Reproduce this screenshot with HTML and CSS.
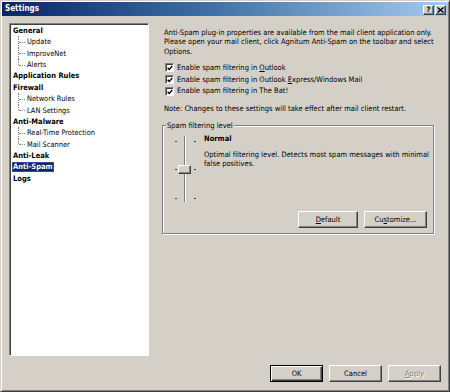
FILE: index.html
```html
<!DOCTYPE html>
<html>
<head>
<meta charset="utf-8">
<link rel="stylesheet" href="styles.css">
</head>
<body>
<div class="window">
  <div class="titlebar">
    <span class="title">Settings</span>
    <div class="tb-buttons">
      <span class="tb-btn help">?</span>
      <span class="tb-btn close"><svg width="7" height="6" viewBox="0 0 7 6"><path d="M0.5 0.5 L6.5 5.5 M6.5 0.5 L0.5 5.5" stroke="#000" stroke-width="1.4"/></svg></span>
    </div>
  </div>
  <div class="client">
    <div class="tree">
      <div class="node parent"><span class="label">General</span></div>
      <div class="group-children">
        <div class="node child">Update</div>
        <div class="node child">ImproveNet</div>
        <div class="node child last">Alerts</div>
      </div>
      <div class="node parent"><span class="label">Application Rules</span></div>
      <div class="node parent"><span class="label">Firewall</span></div>
      <div class="group-children">
        <div class="node child">Network Rules</div>
        <div class="node child last">LAN Settings</div>
      </div>
      <div class="node parent"><span class="label">Anti-Malware</span></div>
      <div class="group-children">
        <div class="node child">Real-Time Protection</div>
        <div class="node child last">Mail Scanner</div>
      </div>
      <div class="node parent"><span class="label">Anti-Leak</span></div>
      <div class="node parent"><span class="sel">Anti-Spam</span></div>
      <div class="node parent"><span class="label">Logs</span></div>
    </div>
    <div class="content">
      <p class="intro">Anti-Spam plug-in properties are available from the mail client application only.<br>Please open your mail client, click Agnitum Anti-Spam on the toolbar and select<br>Options.</p>
      <div class="checks">
        <div class="check"><span class="box"><svg width="7" height="7" viewBox="0 0 7 7"><path d="M0.8 3.2 L2.6 5.2 L6.2 1.2" fill="none" stroke="#000" stroke-width="1.5"/></svg></span><span>Enable spam filtering in <u>O</u>utlook</span></div>
        <div class="check"><span class="box"><svg width="7" height="7" viewBox="0 0 7 7"><path d="M0.8 3.2 L2.6 5.2 L6.2 1.2" fill="none" stroke="#000" stroke-width="1.5"/></svg></span><span>Enable spam filtering in Outlook <u>E</u>xpress/Windows Mail</span></div>
        <div class="check"><span class="box"><svg width="7" height="7" viewBox="0 0 7 7"><path d="M0.8 3.2 L2.6 5.2 L6.2 1.2" fill="none" stroke="#000" stroke-width="1.5"/></svg></span><span>Enable spam filtering in The Bat!</span></div>
      </div>
      <p class="note">Note: Changes to these settings will take effect after mail client restart.</p>
      <fieldset class="group">
        <legend>Spam filtering level</legend>
        <div class="group-body">
          <div class="slider">
            <span class="tick l t1"></span><span class="tick r t1"></span>
            <span class="tick l t2"></span><span class="tick r t2"></span>
            <span class="tick l t3"></span><span class="tick r t3"></span>
            <span class="track"></span>
            <span class="thumb"></span>
          </div>
          <div class="level">
            <div class="level-name">Normal</div>
            <div class="level-desc">Optimal filtering level. Detects most spam messages with minimal<br>false positives.</div>
          </div>
        </div>
        <div class="group-buttons">
          <button class="btn w60"><u>D</u>efault</button>
          <button class="btn w63">Cu<u>s</u>tomize...</button>
        </div>
      </fieldset>
    </div>
  </div>
  <div class="footer">
    <button class="btn w53 default">OK</button>
    <button class="btn w53">Cancel</button>
    <button class="btn w53 disabled"><u>A</u>pply</button>
  </div>
</div>
</body>
</html>
```
FILE: styles.css
```css
html, body {
  margin: 0;
  padding: 0;
  background: #D4D0C8;
}
body {
  font-family: "DejaVu Sans Condensed", "DejaVu Sans", sans-serif;
  font-stretch: condensed;
  font-size: 7.5px;
  line-height: 9.3px;
  color: #000;
}
.window {
  width: 450px;
  height: 392px;
  box-sizing: border-box;
  border: 1px solid;
  border-color: #D4D0C8 #404040 #404040 #D4D0C8;
  box-shadow: inset 1px 1px #fff, inset -1px -1px #808080;
  padding: 1px;
  display: flex;
  flex-direction: column;
  background: #D4D0C8;
}
.titlebar {
  height: 14px;
  flex: none;
  display: flex;
  align-items: center;
  justify-content: space-between;
  padding: 0 2px 0 3px;
  background: linear-gradient(to right, #0A246A 0%, #3A6EA5 45%, #A6CAF0 100%);
}
.title {
  color: #fff;
  font-weight: bold;
  font-size: 8px;
}
.tb-buttons {
  display: flex;
  gap: 1px;
  padding-top: 1px;
}
.tb-btn {
  width: 11px;
  height: 10px;
  box-sizing: border-box;
  background: #D4D0C8;
  border: 1px solid;
  border-color: #fff #404040 #404040 #fff;
  box-shadow: inset -1px -1px #808080;
  display: flex;
  align-items: center;
  justify-content: center;
  font-weight: bold;
  font-size: 7.5px;
  line-height: 8px;
}
.client {
  flex: none;
  display: flex;
  padding: 7px 0 0 7px;
}
.tree {
  width: 140px;
  height: 333px;
  box-sizing: border-box;
  background: #fff;
  border: 1px solid;
  border-color: #808080 #fff #fff #808080;
  box-shadow: inset 1px 1px #404040, 1px 1px #D4D0C8;
  padding-top: 1px;
}
.node {
  height: 11.38px;
  display: flex;
  align-items: center;
  white-space: nowrap;
}
.parent {
  font-weight: bold;
  padding-left: 2px;
}
.label {
  display: inline-block;
  padding: 0 1px;
  line-height: 10px;
  height: 10px;
}
.sel {
  display: inline-block;
  padding: 0 1px;
  line-height: 10px;
  height: 10px;
  background: #0A246A;
  color: #ffffff;
  box-shadow: inset 0 0 0 1px #3A4E8A;
}
.child {
  position: relative;
  padding-left: 17px;
  font-size: 7.4px;
}
.child::before {
  content: "";
  position: absolute;
  left: 8px;
  top: 0;
  height: 100%;
  border-left: 1px dotted #808080;
}
.child.last::before {
  height: 50%;
}
.child::after {
  content: "";
  position: absolute;
  left: 9px;
  top: 50%;
  width: 6px;
  border-top: 1px dotted #808080;
}
.content {
  margin-left: 15px;
  padding-top: 5px;
  width: 272px;
}
.intro {
  margin: 0;
  white-space: nowrap;
}
.checks {
  margin-top: 6px;
}
.check {
  height: 11.7px;
  display: flex;
  align-items: center;
  white-space: nowrap;
}
.box {
  width: 9px;
  height: 9px;
  box-sizing: border-box;
  margin-left: 1px;
  margin-right: 3px;
  background: #fff;
  border: 1px solid;
  border-color: #808080 #fff #fff #808080;
  box-shadow: inset 1px 1px #404040;
  display: flex;
  align-items: center;
  justify-content: center;
}
.box svg {
  display: block;
  margin: 1px 0 0 1px;
  width: 6px;
  height: 6px;
}
.note {
  margin: 7px 0 0 0;
  white-space: nowrap;
}
.group {
  margin: 8px 0 0 -2px;
  width: 272px;
  box-sizing: border-box;
  padding: 0 6px 5px 0;
  border: 1px solid #808080;
  box-shadow: inset 1px 1px #fff, 1px 1px #fff;
  min-width: 0;
}
.group legend {
  margin-left: 3px;
  padding: 0 1px;
  background: #D4D0C8;
  line-height: 9.3px;
}
.group-body {
  display: flex;
  padding-top: 5px;
}
.slider {
  position: relative;
  width: 30px;
  height: 66px;
  margin-left: 9px;
  flex: none;
}
.track {
  position: absolute;
  left: 12px;
  top: 0;
  width: 2px;
  height: 66px;
  box-sizing: border-box;
  border-left: 1px solid #808080;
  border-right: 1px solid #fff;
}
.tick {
  position: absolute;
  width: 2px;
  height: 1px;
  background: #404040;
}
.tick.l { left: 3px; }
.tick.r { left: 22px; }
.t1 { top: 5px; }
.t2 { top: 33px; }
.t3 { top: 62px; }
.thumb {
  position: absolute;
  left: 6px;
  top: 29px;
  width: 13px;
  height: 9px;
  box-sizing: border-box;
  background: #D4D0C8;
  border: 1px solid;
  border-color: #fff #404040 #404040 #fff;
  box-shadow: inset -1px -1px #808080;
}
.level {
  margin-left: 2px;
  margin-top: -2px;
  white-space: nowrap;
}
.level-name {
  font-weight: bold;
  margin-bottom: 7px;
}
.group-buttons {
  display: flex;
  justify-content: flex-end;
  gap: 6px;
  margin-top: 9px;
}
.btn {
  height: 17px;
  box-sizing: border-box;
  background: #D4D0C8;
  border: 1px solid;
  border-color: #fff #404040 #404040 #fff;
  box-shadow: inset -1px -1px #808080;
  font-family: inherit;
  font-stretch: condensed;
  font-size: 7.5px;
  color: #000;
  padding: 0;
  line-height: 9px;
}
.btn.default {
  border: 1px solid #000;
  box-shadow: inset 1px 1px #fff, inset -1px -1px #404040, inset -2px -2px #808080;
}
.btn.disabled {
  color: #808080;
  text-shadow: 1px 1px #fff;
}
.w53 { width: 53px; }
.w60 { width: 60px; }
.w63 { width: 63px; }
.footer {
  margin-top: auto;
  display: flex;
  justify-content: flex-end;
  gap: 6px;
  padding: 0 7px 8px 0;
}
```
